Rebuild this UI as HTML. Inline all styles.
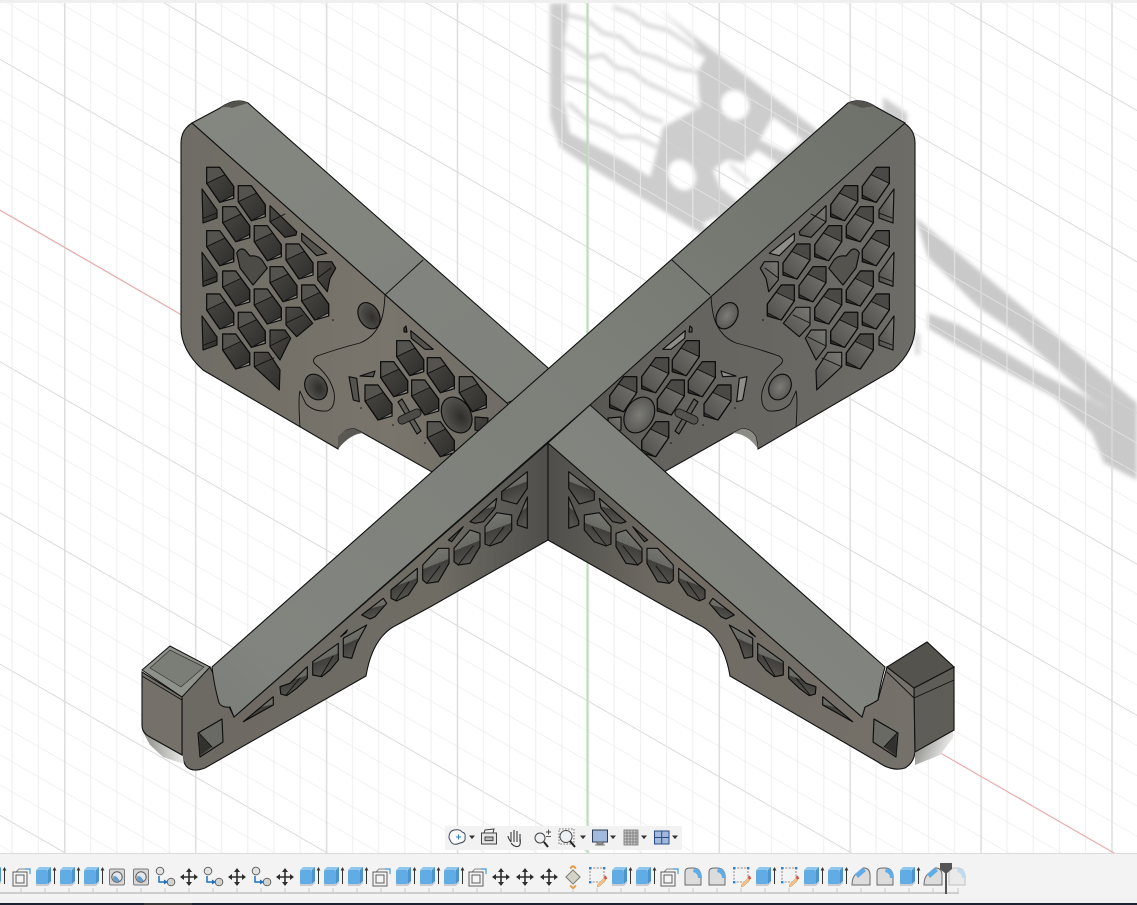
<!DOCTYPE html>
<html><head><meta charset="utf-8"><title>Model</title>
<style>
html,body{margin:0;padding:0;background:#fff;width:1137px;height:905px;overflow:hidden}
svg{display:block}
.c{stroke:#0d0d0d;stroke-width:1.15;stroke-linejoin:round}
.ln{fill:none;stroke:#111;stroke-width:.9;stroke-linejoin:round;stroke-linecap:round}
</style></head><body>
<svg width="1137" height="905" viewBox="0 0 1137 905" xmlns="http://www.w3.org/2000/svg">
<defs>
<filter id="bl" x="-5%" y="-5%" width="110%" height="110%"><feGaussianBlur stdDeviation="2"/></filter>
<pattern id="gv" patternUnits="userSpaceOnUse" width="130.9" height="100" patternTransform="translate(64 0)">
 <rect x="26.18" width="1" height="100" fill="#ececec"/><rect x="52.36" width="1" height="100" fill="#ececec"/><rect x="78.54" width="1" height="100" fill="#ececec"/><rect x="104.72" width="1" height="100" fill="#ececec"/>
 <rect x="0" width="1.6" height="100" fill="#d9d9d9"/>
</pattern>
<pattern id="gd" patternUnits="userSpaceOnUse" width="1200" height="151.2" patternTransform="matrix(1 .577 0 1 0 210)">
 <rect y="30.24" width="1200" height=".9" fill="#ebebeb"/><rect y="60.48" width="1200" height=".9" fill="#ebebeb"/><rect y="90.72" width="1200" height=".9" fill="#ebebeb"/><rect y="120.96" width="1200" height=".9" fill="#ebebeb"/>
 <rect y="0" width="1200" height="1.1" fill="#d2d2d2"/>
</pattern>
<linearGradient id="barG" x1="0" y1="1" x2="1" y2="0">
 <stop offset="0" stop-color="#7c7f79"/><stop offset=".1" stop-color="#82857f"/><stop offset=".55" stop-color="#7d8079"/><stop offset="1" stop-color="#6e706a"/>
</linearGradient>
<linearGradient id="topL" x1="0" y1="0" x2="1" y2="1"><stop offset="0" stop-color="#848780"/><stop offset="1" stop-color="#7f827c"/></linearGradient>
<linearGradient id="rTop" x1="1" y1="0" x2="0" y2="1"><stop offset="0" stop-color="#7f827c"/><stop offset=".85" stop-color="#83867f"/><stop offset="1" stop-color="#6f716b"/></linearGradient>
<linearGradient id="lSide" x1="0" y1="0" x2="1" y2="0"><stop offset="0" stop-color="#6f6c65"/><stop offset=".55" stop-color="#79756c"/><stop offset=".85" stop-color="#6f6c65"/><stop offset="1" stop-color="#55544f"/></linearGradient>
<linearGradient id="rSide" x1="0" y1="0" x2="1" y2="0"><stop offset="0" stop-color="#4b4a46"/><stop offset=".3" stop-color="#64625c"/><stop offset="1" stop-color="#6d6c66"/></linearGradient>
<linearGradient id="aL" x1="0" y1="0" x2="1" y2="0"><stop offset="0" stop-color="#6d6a63"/><stop offset=".7" stop-color="#6f6c64"/><stop offset="1" stop-color="#4f4e4a"/></linearGradient>
<linearGradient id="aR" x1="0" y1="0" x2="1" y2="0"><stop offset="0" stop-color="#4f4e4a"/><stop offset=".3" stop-color="#6f6b63"/><stop offset="1" stop-color="#75716a"/></linearGradient>
<linearGradient id="cellG" x1="0" y1="0" x2=".3" y2="1"><stop offset="0" stop-color="#7b7b75"/><stop offset=".55" stop-color="#6a6a64"/><stop offset=".55" stop-color="#3f3e3a"/><stop offset="1" stop-color="#55544f"/></linearGradient>
<linearGradient id="bodyL" x1="0" y1="0" x2="1" y2="1"><stop offset="0" stop-color="#4a4945"/><stop offset="1" stop-color="#2f2e2b"/></linearGradient>
<linearGradient id="bodyR" x1="0" y1="0" x2="1" y2="1"><stop offset="0" stop-color="#7a7a75"/><stop offset="1" stop-color="#4e4d49"/></linearGradient>
<radialGradient id="hL" cx=".6" cy=".6" r=".7"><stop offset="0" stop-color="#2f2e2b"/><stop offset="1" stop-color="#5c5a55"/></radialGradient>
<radialGradient id="hR" cx=".5" cy=".5" r=".7"><stop offset="0" stop-color="#7d7d78"/><stop offset="1" stop-color="#4b4a46"/></radialGradient>
<linearGradient id="cham" x1="0" y1="0" x2="1" y2="0"><stop offset="0" stop-color="#8c8c86"/><stop offset="1" stop-color="#e8e8e6"/></linearGradient>
<linearGradient id="chamR" x1="0" y1="0" x2="1" y2=".4"><stop offset="0" stop-color="#7a7a75"/><stop offset="1" stop-color="#f2f2f2"/></linearGradient>

<g id="hx">
 <path class="c" d="M0,0H13L27,19V31L13,35L0,16Z" style="fill:var(--l)"/>
 <path d="M0,0H13L18,7.5L0,16Z" style="fill:var(--u)"/>
 <path d="M16,33.5L26.5,28V31L13,35Z" style="fill:var(--b)"/>
 <path class="ln" d="M0,16L18,7.5M16,33.5L26.5,28"/>
 <path class="c" fill="none" d="M0,0H13L27,19V31L13,35L0,16Z"/>
</g>
<g id="hl">
 <path class="c" d="M0,0L15,21V29L1,34Z" style="fill:var(--l)"/>
 <path class="ln" d="M2,29L15,24"/>
</g>

<g id="bc">
 <use href="#hx" x="206.7" y="167.3"/><use href="#hx" x="238.3" y="185.7"/><use href="#hx" x="222.7" y="206.7"/>
 <use href="#hx" x="254.3" y="225.7"/><use href="#hx" x="206.7" y="230.7"/><use href="#hx" x="286" y="244"/>
 <use href="#hx" x="222.7" y="271"/><use href="#hx" x="270" y="266.7"/><use href="#hx" x="254.3" y="289"/>
 <use href="#hx" x="206.7" y="294"/><use href="#hx" x="301.7" y="285"/><use href="#hx" x="238.3" y="312.3"/>
 <use href="#hx" x="222.7" y="334"/>
 <use href="#hl" x="202" y="189"/><use href="#hl" x="202" y="252.3"/><use href="#hl" x="202" y="316"/>
 <path class="c" style="fill:var(--l)" d="M270,205.7L296.7,231.7L296,235L285,237.3L270,221.7Z"/>
 <path class="ln" d="M270,221.7L285,214"/>
 <path class="c" style="fill:var(--s)" d="M301.7,233.3L326.7,253.3L316.7,255.7L301.7,240.7Z"/>
 <path class="c" style="fill:var(--l)" d="M317.7,261.7L331.7,261.7L335.7,268.3L330,278.3L327.3,291.7L317.7,280Z"/>
 <path class="ln" d="M317.7,278L331,268"/>
 <path class="c" style="fill:var(--l)" d="M286,307.3L300,307.3L312.7,323.3L296.7,336.7L286,325Z"/>
 <path class="ln" d="M286,323L303,315"/>
 <path class="c" style="fill:var(--l)" d="M270,330L285,330L290.7,338.3L283.3,353.3L280,360L270,346.7Z"/>
 <path class="ln" d="M270,346L288,337"/>
 <path class="c" style="fill:var(--l)" d="M254.3,352.3L268.3,352.3L280,370L279.3,390L254.3,366.7Z"/>
 <path class="ln" d="M254.3,366.7L274,358"/>
 <path class="c" style="fill:var(--h)" d="M236.7,253Q240,247 245,250L250,256Q258,255 262,260L267.3,268.3L253,285L240,268Z"/>
 <!-- lower panel -->
 <use href="#hx" x="396.7" y="340.7"/><use href="#hx" x="380.7" y="361.7"/><use href="#hx" x="365" y="385"/>
 <use href="#hx" x="427.3" y="357.7"/><use href="#hx" x="411.7" y="380"/><use href="#hx" x="459.3" y="376.7"/>
 <use href="#hx" x="427.3" y="421.7"/>
 <path class="c" style="fill:var(--l)" d="M475,417L488,418L487,433L475,430Z"/>
 <path class="c" style="fill:var(--s)" d="M410.7,330.7L433.3,349.3L425,349.3L411.3,338.3Z"/>
 <path class="c" style="fill:var(--s)" d="M349,376.7L356.7,378.3L359.3,401.7L353.3,400Z"/>
 <path class="c" style="fill:var(--s)" d="M360,376L375,371L373.3,376.7Z"/>
 <path class="c" style="fill:var(--l)" d="M404,328L406,326L407,332L404,332Z"/>
 <path class="c" style="fill:#5e5c56" d="M398,402L402,399L421,431L417,434Z"/>
 <path d="M402,420L417,413" stroke="#111" stroke-width="9" stroke-linecap="round"/>
 <path d="M402,420L417,413" style="stroke:var(--h)" stroke-width="7.4" stroke-linecap="round"/>
 <ellipse class="c" cx="456.7" cy="415" rx="14" ry="19" transform="rotate(-30 456.7 415)" style="fill:var(--e)"/>
 <ellipse class="c" cx="369" cy="315.7" rx="10" ry="14" transform="rotate(-30 369 315.7)" style="fill:var(--e)"/>
 <ellipse class="c" cx="316" cy="387" rx="10.5" ry="13.5" transform="rotate(-30 316 387)" style="fill:var(--e)"/>
 <path class="ln" d="M385,295Q384,318 378,327Q372,338 360,343Q340,348 317,356Q311,360 315,364Q330,376 334,392Q336,408 327,411Q314,412 306,404Q302,396 300,391Q298,398 300,427"/>
 <circle cx="333" cy="320" r=".8" fill="#111"/><circle cx="361" cy="408" r=".8" fill="#111"/><circle cx="393" cy="425" r=".8" fill="#111"/><circle cx="425" cy="443" r=".8" fill="#111"/>
</g>

<g id="ac">
 <path class="c" fill="url(#cellG)" d="M243.3,721.7L273.3,696.7V705Z"/>
 <path class="c" fill="url(#cellG)" d="M280,686.7L290,683.3L307.3,666.7V678.3L296.7,688.3L286.7,695.7L280.7,694Z"/>
 <path class="c" fill="url(#cellG)" d="M312.7,661.7L338.3,643.3V660L330,670L321.7,676.7L312.7,675Z"/>
 <path class="c" fill="url(#cellG)" d="M343.3,638.3L366.7,625L356.7,643.3L351.7,658.3L343.3,656.7Z"/>
 <path class="c" fill="#4a4945" d="M340.7,636.7L347.3,630L346,632.7Z"/>
 <path class="c" fill="url(#cellG)" d="M361.7,615L383.3,598.3L386.7,603.3L375,616.7L370,619Z"/>
 <path class="c" fill="url(#cellG)" d="M391,590L417.3,568.3V581.7L408.3,595L396.7,601L391,598.3Z"/>
 <path class="c" fill="url(#cellG)" d="M422.7,565L438.3,548.3H449V563.3L438.3,581.7L426.7,583.3L422.7,580Z"/>
 <path class="c" fill="url(#cellG)" d="M454,548.3L470,530L480,533.3V546.7L470,563.3L458.3,565L454,561.7Z"/>
 <path class="c" fill="#4a4945" d="M448.3,540L463.3,526.7L451.7,541.7Z"/>
 <path class="c" fill="url(#cellG)" d="M485,526.7L496.7,512.7L511.7,515V530L501.7,541.7L490,546L485,544Z"/>
 <path class="c" fill="url(#cellG)" d="M470,521.7L496.7,498.3L495,508.3L483.3,521.7L475,523.3Z"/>
 <path class="c" fill="url(#cellG)" d="M501.7,491.7L527.3,471.7V488.3L516.7,504L501.7,500Z"/>
 <path class="c" fill="url(#cellG)" d="M517.3,521L527.3,497V528.3L517.3,525Z"/>
 <path class="ln" d="M286,695L300,678M321,676L333,656M427,583L440,566M458,565L473,546M490,545L504,527M396,600L409,582"/>
 <path class="c" fill="#6a6a64" d="M198,733L222,719L223,742L200,757Z"/>
 <path fill="#33322f" d="M199,733L212,747L200,756Z"/>
 <path class="ln" d="M199,733L212,747"/>
</g>

<!-- toolbar icons -->
<g id="ext">
 <path d="M-11,-7L-8,-10H4L1,-7Z" fill="#8fc6ee"/>
 <rect x="-11" y="-7" width="12" height="14" rx="1.4" fill="#62ace6"/>
 <path d="M1,-7L4,-10V4L1,7Z" fill="#4d93d0"/>
 <path d="M-11,7H1L4,4V6L1,9H-11Z" fill="#c8ccd0"/>
 <path d="M7.5,7V-7" stroke="#333" stroke-width="1"/><path d="M7.5,-10L5.6,-6.5H9.4Z" fill="#333"/>
</g>
<g id="frm">
 <path d="M-5,-5L-2,-8H8" fill="none" stroke="#8a8a8a"/><path d="M4,-8H9V-3" fill="none" stroke="#5aa6e4" stroke-width="1.4"/>
 <rect x="-8" y="-5" width="14" height="14" fill="#f4f4f4" stroke="#5e5e5e"/>
 <rect x="-5" y="-2" width="8" height="8" fill="#f4f4f4" stroke="#5e5e5e"/>
</g>
<g id="fit">
 <rect x="-7.5" y="-8" width="15" height="16" rx="1.5" fill="#d6d6d6" stroke="#7a7a7a"/>
 <circle r="5.2" fill="#e4e8ec" stroke="#5a5a5a"/>
 <path d="M-3.5,-1.5L0,0L3,4A5,5 0 0 1 -4,2Z" fill="#6a9cc8"/>
</g>
<g id="jnt">
 <circle cx="-5" cy="-6" r="3.8" fill="#e2e2e2" stroke="#666"/>
 <circle cx="6" cy="5" r="3.8" fill="#d2d2d2" stroke="#666"/>
 <path d="M-6,-1V5H0" fill="none" stroke="#1f6fc0" stroke-width="1.5"/><path d="M3,5L-1,2.5V7.5Z" fill="#1f6fc0"/>
</g>
<g id="mov" fill="#2e2e2e">
 <path d="M-7,0H7M0,-7V7" stroke="#2e2e2e" stroke-width="1.6"/>
 <path d="M0,-9L-3,-5H3ZM0,9L-3,5H3ZM-9,0L-5,-3V3ZM9,0L5,-3V3Z"/>
</g>
<g id="skt">
 <rect x="-7" y="-9" width="14" height="14" fill="none" stroke="#8a8a8a" stroke-dasharray="2 1.4"/>
 <path d="M-8,-10h2.4v2.4h-2.4zM6,-10h2.4v2.4h-2.4zM-8,4h2.4v2.4h-2.4z" fill="#2f86d0"/>
 <path d="M1,7L7,1L9,3L3,9L0,10Z" fill="#f2c088" stroke="#c98a3f" stroke-width=".4"/><path d="M6.5,0L9,-1.5L10,2L8.5,2.5Z" fill="#e2492f"/>
</g>
<g id="fil">
 <path d="M-8,8V-5Q-8,-9 -3,-9H0Q8,-9 8,0V8Z" fill="#dcdcdc" stroke="#6a6a6a"/>
 <path d="M1,-9Q9,-8 9,1L5,1Q5,-4 0,-5Z" fill="#62ace6"/>
</g>
<g id="chm">
 <path d="M-9,8Q-9,0 -5,-3L2,-9H4Q9,-8 9,-2V8Z" fill="#dcdcdc" stroke="#6a6a6a"/>
 <path d="M-6,-3L2,-9.5L5,-6L-3,1Z" fill="#62ace6"/>
</g>
</defs>

<rect width="1137" height="905" fill="#fff"/>

<!-- shadow -->
<g filter="url(#bl)">
 <path d="M550,3H651L817,130L870,165L720,245L583,163L560,147L550,117Z" fill="#cdcdcd"/>
 <path d="M568,3H652L693,40L705,58L697,72L700,107L663,127L650,177L623,160L570,133L564,100L564,43L568,17Z" fill="#fff"/>
 <path d="M613,7L630,13L647,25L667,30L687,43L703,55" fill="none" stroke="#d4d4d4" stroke-width="4"/>
 <path d="M568,15L587,20L603,33L620,37L637,52L657,58L677,68L697,72" fill="none" stroke="#d4d4d4" stroke-width="4"/>
 <path d="M563,42L587,58L603,55L617,68L630,70L647,83L667,92L697,107" fill="none" stroke="#d4d4d4" stroke-width="4"/>
 <path d="M565,77L587,82L610,97L623,100L643,115L663,122" fill="none" stroke="#d4d4d4" stroke-width="4"/>
 <path d="M568,103L587,120L607,128L620,137L637,137L657,147" fill="none" stroke="#d4d4d4" stroke-width="4"/>
 <ellipse cx="735" cy="105" rx="14" ry="15" transform="rotate(-30 735 105)" fill="#fff"/>
 <ellipse cx="682" cy="175" rx="13" ry="16" transform="rotate(-30 682 175)" fill="#fff"/>
 <path d="M773,117L803,140L787,153L760,140L767,127Z" fill="#fff"/>
 <path d="M713,170L727,160L743,163L757,150L777,163L750,190L740,203L720,187Z" fill="#fff"/>
 <path d="M730,165L750,182" stroke="#d4d4d4" stroke-width="3" fill="none"/>
 <path d="M703,223L717,217L722,226L710,234Z" fill="#fff"/>
 <path d="M883,97L907,113V125L883,118Z" fill="#cfcfcf"/>
 <path d="M915,217L1137,403V423L1092,400L1016,333L978,307L928,257Z" fill="#c9c9c9"/>
 <path d="M928,313L959,325L997,347L1035,370L1073,390L1100,405L1137,420V480L1104,463L1092,433L1054,397L997,367L959,347L928,328Z" fill="#c9c9c9"/>
 <path d="M915,333H920V355H915Z" fill="#dcdcdc"/>
</g>

<!-- grid -->
<rect width="1137" height="905" fill="url(#gd)" opacity=".85"/>
<rect width="1137" height="905" fill="url(#gv)" opacity=".85"/>
<rect x="0" y="0" width="1137" height="3" fill="#efefef"/>
<path d="M0,210L182,315M930,747L1116,854" stroke="#f0a5a5" stroke-width="1"/>
<rect x="586.4" y="3" width="1.4" height="850" fill="#a8e6a8"/>

<!-- left back bracket -->
<path d="M192,123Q181,130 181,143L181,327Q181,350 203,370L338,449L340,437Q345,428 355,429L363,433L432,472L560,472L507,403Z" fill="url(#lSide)" stroke="#111" stroke-width="1.1"/>
<path d="M192,123L220,108Q235,97 248,103L547,367L560,380L507,403Z" fill="url(#topL)" stroke="#111" stroke-width="1.1"/>
<path d="M220,108Q235,97 248,103L232,108Q226,106 220,108Z" fill="#55534e"/>
<path d="M423,260L385,295" class="ln"/>
<g style="--u:#55534e;--l:url(#bodyL);--b:#8a8a85;--s:#55534e;--h:#4d4b46;--e:url(#hL)"><use href="#bc"/></g>
<path d="M338,449V437Q345,428 355,429L363,433Q350,434 338,449Z" fill="#5a5853"/>

<!-- right back bracket -->
<path d="M904,123Q915,130 915,143L915,327Q915,350 893,370L758,449L756,437Q751,428 741,429L733,433L664,472L536,472L589,403Z" fill="url(#rSide)" stroke="#111" stroke-width="1.1"/>
<g transform="matrix(-1 0 0 1 1096 0)" style="--u:#4a4945;--l:url(#bodyR);--b:#33322f;--s:#8e8e88;--h:#54534e;--e:url(#hR)"><use href="#bc"/></g>
<path d="M758,449L756,437Q751,428 741,429L733,433Q748,434 758,449Z" fill="#8c8c86"/>

<!-- left arm side + block -->
<path d="M234,717L548,443V540L430,607L393,627Q372,640 366,676L205,768Q192,773 186,766Q182,760 182,750V690L210,667Z" fill="url(#aL)" stroke="#111" stroke-width="1.1"/>

<!-- right arm side -->
<path d="M862,717L548,443V540L666,607L703,627Q724,640 730,676L878,762Q892,772 905,768Q915,762 915,750L914,688L887,667L878,700L865,707Z" fill="url(#aR)" stroke="#111" stroke-width="1.1"/>

<use href="#ac"/>
<use href="#ac" transform="matrix(-1 0 0 1 1096 0)"/>

<!-- main diagonal top face -->
<path d="M905,123L876,107Q861,97 848,103L212,667Q214,685 219,703Q222,708 230,707L234,717L590,405Z" fill="url(#barG)" stroke="#111" stroke-width="1.1"/>
<path d="M876,107Q861,97 848,103L862,108Q870,106 876,107Z" fill="#55534e"/>
<path d="M672,260L710,295" class="ln"/>
<!-- front right top face -->
<path d="M590,405L885,667Q880,685 878,700Q870,705 865,707L862,717L548,443Z" fill="url(#rTop)" stroke="#111" stroke-width="1.1"/>
<path d="M548,443V540" class="ln"/>

<!-- left block -->
<path d="M142,730L182,750L184,764L163,757L150,745Z" fill="url(#cham)"/>
<path d="M142,672L182,697V755L150,737Q142,733 142,725Z" fill="#75716a" stroke="#111" stroke-width="1.1"/>
<path d="M142,670L170,646L210,667L182,697Z" fill="#8f918b" stroke="#111" stroke-width="1"/>
<path d="M150,668L170,650L204,667L181,687Z" fill="#7b7d77" stroke="#33322f" stroke-width=".7"/>
<path d="M142,676L182,700" class="ln"/>

<!-- right block -->
<path d="M915,752L953,730V738L940,755L915,765Z" fill="url(#chamR)"/>
<path d="M914,688L954,667V730L915,752Z" fill="#5f5d57" stroke="#111" stroke-width="1.1"/>
<path d="M887,667L927,642L954,667L914,688Z" fill="#55534d" stroke="#111" stroke-width="1.1"/>
<path d="M887,672L914,698L954,680" class="ln"/>

<!-- nav bar -->
<rect x="445" y="826" width="237" height="24" fill="#f2f2f2"/>
<g fill="none" stroke="#3e4a5c" stroke-width="1">
 <path d="M449,838q0,-7 5,-8 q6,-1 8,2 q4,1 3,5 q1,5 -5,6 q-6,3 -9,-1z" fill="#fafafa"/>
 <path d="M456,837h5M458.5,834.5v5" stroke="#2f7fd0"/>
</g>
<path d="M469,835.5h6l-3,3.6z" fill="#333"/>
<g fill="none" stroke="#444" stroke-width="1">
 <rect x="481.5" y="833" width="15" height="11" fill="#e6e6e6"/><rect x="485" y="837" width="8" height="3.6" fill="#bbb"/>
 <path d="M484,833l1,-3 9,-1 -1,4"/>
</g>
<path d="M511,842Q508,838 508,836M511,842V832M514,842V830M517,842V831M520,842V834M511,843Q515,848 519,846Q521,844 520,838" fill="none" stroke="#3a3a3a" stroke-width="1.1"/>
<circle cx="540" cy="838" r="5" fill="#eef1f4" stroke="#444"/><path d="M544,842l4,5" stroke="#222" stroke-width="2"/><path d="M546,832h5M548.5,829.5v5M546,836.4h5" stroke="#444" stroke-width=".9"/>
<rect x="559" y="829" width="15" height="15" fill="none" stroke="#777" stroke-dasharray="1.6 1.4"/><circle cx="566" cy="836.5" r="6" fill="#eef1f4" stroke="#444"/><path d="M570,841l5,6" stroke="#222" stroke-width="2"/>
<path d="M580,835.5h6l-3,3.6z" fill="#333"/>
<rect x="592.5" y="830" width="15" height="12" fill="#a3b9dc" stroke="#2d3c58"/><path d="M597,842h6v2h-6zM595,845h10" fill="#aaa" stroke="#555" stroke-width=".8"/>
<path d="M610,835.5h6l-3,3.6z" fill="#333"/>
<g stroke="#777" stroke-width=".8" fill="#c7c7c7"><rect x="624" y="830" width="14" height="15"/><path d="M627,830v15M630,830v15M633,830v15M636,830v15M624,833h14M624,836h14M624,839h14M624,842h14" fill="none"/></g>
<path d="M641,835.5h6l-3,3.6z" fill="#333"/>
<rect x="654.5" y="831" width="14.5" height="13" fill="#a3b9dc" stroke="#2a4a85"/><path d="M661.7,831v13M654.5,837.5h14.5" stroke="#2a4a85"/>
<path d="M672,835.5h6l-3,3.6z" fill="#333"/>

<!-- bottom timeline -->
<rect x="0" y="853" width="1137" height="50" fill="#f3f3f3"/>
<rect x="0" y="853" width="1137" height="1" fill="#dcdcdc"/>
<rect x="0" y="903" width="1137" height="2" fill="#1d2333"/>
<rect x="144" y="903" width="48" height="2" fill="#3a3a3a"/>
<rect x="0" y="892" width="959" height="2" fill="#cdcdcd"/>
<path d="M21,888v4M45,888v4M69,888v4M93,888v4M117,888v4M141,888v4M165,888v4M189,888v4M213,888v4M237,888v4M261,888v4M285,888v4M309,888v4M333,888v4M357,888v4M381,888v4M405,888v4M429,888v4M453,888v4M477,888v4M501,888v4M525,888v4M549,888v4M573,888v4M597,888v4M621,888v4M645,888v4M669,888v4M693,888v4M717,888v4M741,888v4M765,888v4M789,888v4M813,888v4M837,888v4M861,888v4M885,888v4M909,888v4M933,888v4M958,888v4" stroke="#c8c8c8" stroke-width="1"/>

<use href="#ext" x="-3" y="877"/>
<use href="#frm" x="21" y="877"/>
<use href="#ext" x="47" y="877"/><use href="#ext" x="71" y="877"/><use href="#ext" x="95" y="877"/>
<use href="#fit" x="117" y="877"/><use href="#fit" x="141" y="877"/>
<use href="#jnt" x="165" y="877"/><use href="#mov" x="189" y="877"/>
<use href="#jnt" x="213" y="877"/><use href="#mov" x="237" y="877"/>
<use href="#jnt" x="261" y="877"/><use href="#mov" x="285" y="877"/>
<use href="#ext" x="311" y="877"/><use href="#ext" x="335" y="877"/><use href="#ext" x="359" y="877"/>
<use href="#frm" x="381" y="877"/>
<use href="#ext" x="407" y="877"/><use href="#ext" x="431" y="877"/><use href="#ext" x="455" y="877"/>
<use href="#frm" x="477" y="877"/>
<use href="#mov" x="501" y="877"/><use href="#mov" x="525" y="877"/><use href="#mov" x="549" y="877"/>
<g transform="translate(573 877) rotate(45)"><rect x="-5" y="-5" width="10" height="10" fill="#d2d2c8" stroke="#7a7a6a"/><path d="M-8,-8h4M-8,-8v4M8,8h-4M8,8v-4" stroke="#e69a4a" stroke-width="2" fill="none"/></g>
<use href="#skt" x="597" y="877"/>
<use href="#ext" x="623" y="877"/><use href="#ext" x="647" y="877"/>
<use href="#frm" x="669" y="877"/>
<use href="#fil" x="693" y="877"/><use href="#fil" x="717" y="877"/>
<use href="#skt" x="741" y="877"/>
<use href="#ext" x="767" y="877"/>
<use href="#skt" x="789" y="877"/>
<use href="#ext" x="815" y="877"/><use href="#ext" x="839" y="877"/>
<use href="#chm" x="861" y="877"/><use href="#fil" x="885" y="877"/>
<use href="#ext" x="911" y="877"/>
<use href="#chm" x="933" y="877"/>
<use href="#fil" x="957" y="877" opacity=".35"/>
<path d="M940,863H952V869L946,874L940,869Z" fill="#555"/>
<rect x="945" y="871" width="2" height="23" fill="#555"/>
</svg>
</body></html>
